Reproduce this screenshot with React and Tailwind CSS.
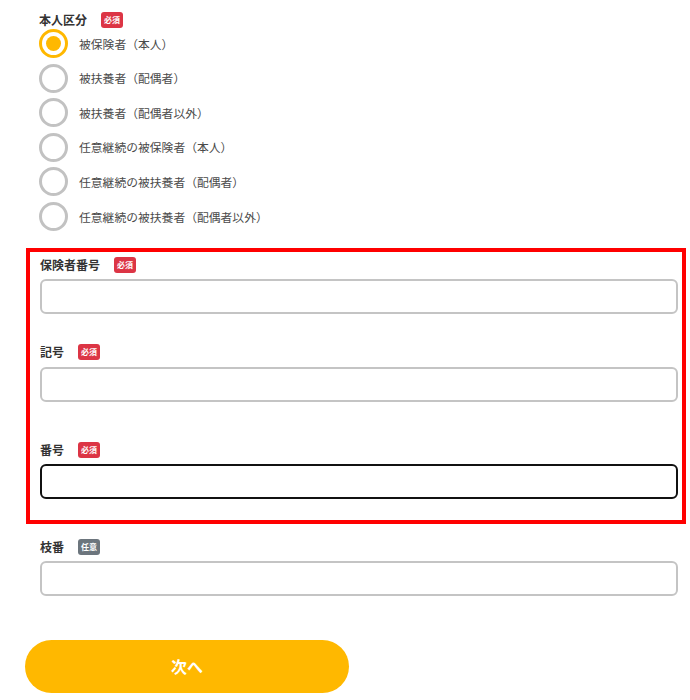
import React, { useState } from 'react';

const font = { fontFamily: '"Noto Sans CJK JP", "Noto Sans", sans-serif' };

const options = [
    '被保険者（本人）',
    '被扶養者（配偶者）',
    '被扶養者（配偶者以外）',
    '任意継続の被保険者（本人）',
    '任意継続の被扶養者（配偶者）',
    '任意継続の被扶養者（配偶者以外）',
];

const Badge = ({ optional }) => (
    <span
        className={`ml-[14px] inline-flex h-[16px] w-[22px] items-center justify-center rounded-[3px] text-[8px] font-bold leading-none text-white ${optional ? 'bg-[#6c757d]' : 'bg-[#dc3545]'}`}
    >
        {optional ? '任意' : '必須'}
    </span>
);

const Label = ({ text, optional, className = '' }) => (
    <div className={`flex h-[18px] items-center ${className}`}>
        <span className="text-[12px] font-bold leading-[18px] text-[#333]">{text}</span>
        <Badge optional={optional} />
    </div>
);

const Field = ({ focused, className = '' }) => (
    <input
        type="text"
        className={`block h-[35px] w-[638px] rounded-[6px] border-2 bg-white px-3 text-[13px] outline-none ${focused ? 'border-[#111]' : 'border-[#c4c4c4]'} ${className}`}
    />
);

export default function App() {
    const [selected, setSelected] = useState(0);

    return (
        <div className="min-h-[700px] w-[690px] bg-white" style={font}>
            <div className="pl-[39px] pt-[11px]">
                <Label text="本人区分" />
                <div className="flex flex-col gap-[5.6px]">
                    {options.map((opt, i) => (
                        <label key={opt} className="flex h-[29px] cursor-pointer items-center" onClick={() => setSelected(i)}>
                            {selected === i ? (
                                <span className="flex h-[29px] w-[29px] items-center justify-center rounded-full border-[3px] border-[#ffb800] bg-white">
                                    <span className="h-[15px] w-[15px] rounded-full bg-[#ffb800]" />
                                </span>
                            ) : (
                                <span className="h-[29px] w-[29px] rounded-full border-[3px] border-[#c2c2c2] bg-white" />
                            )}
                            <span className="ml-[11px] text-[11.8px] text-[#4a4a4a]">{opt}</span>
                        </label>
                    ))}
                </div>
            </div>

            <div className="ml-[26px] mt-[17px] w-[660px] border-4 border-[#ff0000] pb-[21px] pl-[10px] pt-[4px]">
                <Label text="保険者番号" />
                <Field className="mt-[5px]" />
                <Label text="記号" className="mt-[29px]" />
                <Field className="mt-[6px]" />
                <Label text="番号" className="mt-[39px]" />
                <Field focused className="mt-[5px]" />
            </div>

            <div className="pl-[40px] pt-[14px]">
                <Label text="枝番" optional />
                <Field className="mt-[5px]" />
            </div>

            <button className="ml-[25px] mt-[44px] flex h-[53px] w-[324px] items-center justify-center rounded-full bg-[#ffb800] text-[16px] font-bold text-white">
                次へ
            </button>
        </div>
    );
}
